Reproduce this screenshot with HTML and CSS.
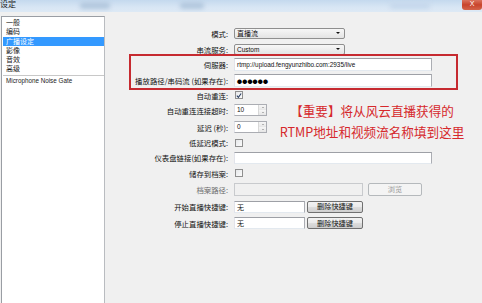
FILE: index.html
```html
<!DOCTYPE html>
<html lang="zh-CN">
<head>
    <meta charset="UTF-8">
    <meta name="viewport" content="width=device-width, initial-scale=1.0">
    <title>设定</title>
    <link rel="stylesheet" href="styles.css">
</head>
<body>
    <div class="titlebar">
        <span class="title">设定</span>
        <span class="blob b1"></span>
        <span class="blob b2"></span>
        <span class="blob b3"></span>
        <span class="close">X</span>
    </div>

    <div class="window">
        <ul class="sidebar">
            <li>一般</li>
            <li>编码</li>
            <li class="active">广播设定</li>
            <li>影像</li>
            <li>音效</li>
            <li>高级</li>
            <li class="sep">Microphone Noise Gate</li>
        </ul>

        <div class="panel">
            <div class="form">
                <label>模式:</label>
                <div class="field"><div class="select">直播流</div></div>

                <label>串流服务:</label>
                <div class="field"><div class="select latin">Custom</div></div>

                <label>伺服器:</label>
                <div class="field"><div class="input wide latin">rtmp://upload.fengyunzhibo.com:2935/live</div></div>

                <label>播放路径/串码流 (如果存在):</label>
                <div class="field"><div class="input wide dots">●●●●●●</div></div>

                <label>自动重连:</label>
                <div class="field">
                    <span class="check">
                        <svg width="7" height="7" viewBox="0 0 7 7"><polyline points="1,3.6 2.8,5.6 6,1.2" fill="none" stroke="#2a3f63" stroke-width="1.3"/></svg>
                    </span>
                </div>

                <label>自动重连连接超时:</label>
                <div class="field"><div class="spin"><span class="latin">10</span><span class="arrows"><i class="up"></i><i class="down"></i></span></div></div>

                <label>延迟 (秒):</label>
                <div class="field"><div class="spin"><span class="latin">0</span><span class="arrows"><i class="up"></i><i class="down"></i></span></div></div>

                <label>低延迟模式:</label>
                <div class="field"><span class="check"></span></div>

                <label>仪表盘链接(如果存在):</label>
                <div class="field"><div class="input wide short"></div></div>

                <label>储存到档案:</label>
                <div class="field"><span class="check"></span></div>

                <label class="muted">档案路径:</label>
                <div class="field">
                    <div class="input path"></div>
                    <button class="btn disabled">浏览</button>
                </div>

                <label>开始直播快捷键:</label>
                <div class="field">
                    <div class="input hotkey">无</div>
                    <button class="btn">删除快捷键</button>
                </div>

                <label>停止直播快捷键:</label>
                <div class="field">
                    <div class="input hotkey">无</div>
                    <button class="btn">删除快捷键</button>
                </div>
            </div>

            <div class="callout"></div>
            <div class="note">
                <p>【重要】将从风云直播获得的</p>
                <p>RTMP地址和视频流名称填到这里</p>
            </div>
        </div>
    </div>
</body>
</html>
```

FILE: styles.css
```css
*{
    margin: 0;
    padding: 0;
    box-sizing: border-box;
}
body{
    width: 482px;
    height: 303px;
    overflow: hidden;
    background-color: #f0f0f0;
    font-family: "Noto Sans CJK SC", "Liberation Sans", sans-serif;
    font-size: 7.4px;
    color: #111;
}
.latin{
    font-family: "Liberation Sans", "Noto Sans CJK SC", sans-serif;
}

/* title bar */
.titlebar{
    position: relative;
    height: 12px;
    background: linear-gradient(#c4d9ee, #d8e6f4 60%, #dde9f5);
    overflow: hidden;
}
.title{
    display: block;
    font-size: 8px;
    line-height: 9px;
    margin-top: -1px;
    color: #222;
}
.blob{
    position: absolute;
    top: 2px;
    height: 7px;
    border-radius: 3px;
    background: #b3c8de;
    filter: blur(2px);
}
.b1{ left: 80px; width: 30px; }
.b2{ left: 180px; width: 24px; }
.b3{ left: 390px; width: 40px; background: #c6d8ec; }
.close{
    position: absolute;
    right: 0;
    top: -3px;
    width: 20px;
    height: 13px;
    border-radius: 0 0 3px 3px;
    background: linear-gradient(#e6907c, #c8442c 60%, #d4644a);
    color: #fff;
    font-size: 7px;
    line-height: 14px;
    text-align: center;
    font-family: "Liberation Sans", sans-serif;
}

.window{
    display: flex;
    padding-top: 4px;
}

/* left list */
.sidebar{
    list-style: none;
    width: 104px;
    height: 300px;
    margin-left: 1px;
    padding: 1px 0 0 1px;
    background-color: #fff;
    border: 1px solid #9a9ea4;
    border-right-color: #b9bcc0;
}
.sidebar li{
    height: 9.3px;
    line-height: 9.3px;
    padding-left: 3px;
    font-size: 7px;
    color: #1a1a1a;
}
.sidebar .active{
    background-color: #3399ff;
    color: #fff;
}
.sidebar .sep{
    margin-top: 1px;
    border-top: 1px solid #c8c8c8;
    height: 10px;
    line-height: 9px;
    font-family: "Liberation Sans", sans-serif;
    font-size: 6.3px;
}

/* form */
.panel{
    position: relative;
    flex: 1;
    padding-top: 9px;
}
.form{
    display: grid;
    grid-template-columns: 123px auto;
    grid-template-rows: 16px 16px 15px 17px 12px 18px 16px 15px 15px 16px 17px 17px 16px;
    column-gap: 6px;
    align-items: center;
}
.form label{
    text-align: right;
    white-space: nowrap;
}
.form .muted{
    color: #6a6a6a;
}
.field{
    display: flex;
    align-items: center;
    gap: 2px;
}

.select{
    position: relative;
    width: 111px;
    height: 11px;
    line-height: 9px;
    padding-left: 2px;
    border: 1px solid #8f8f8f;
    border-radius: 2px;
    background: linear-gradient(#f7f7f7, #e4e4e4);
    font-size: 7px;
}
.select.latin{
    font-size: 6.5px;
}
.select::after{
    content: "";
    position: absolute;
    right: 4px;
    top: 3.5px;
    border-left: 2px solid transparent;
    border-right: 2px solid transparent;
    border-top: 2.5px solid #111;
}

.input{
    height: 13px;
    line-height: 11px;
    padding-left: 2px;
    background-color: #fff;
    border: 1px solid #abadb3;
    border-top-color: #9ea0a6;
    border-left-color: #e2e3ea;
    border-bottom-color: #e3e9ef;
    font-size: 7px;
}
.input.latin{
    font-size: 6.4px;
}
.wide{
    width: 198px;
}
.short{
    height: 12px;
}
.dots{
    font-size: 5px;
    letter-spacing: 0.2px;
    color: #000;
}
.path{
    width: 129px;
    background-color: #f0f0f0;
    border-color: #c8cacd;
}
.hotkey{
    width: 71px;
    height: 12px;
}

.check{
    display: flex;
    align-items: center;
    justify-content: center;
    width: 8px;
    height: 8px;
    margin-left: 1px;
    background: linear-gradient(135deg, #e6e8ea, #fbfbfb);
    border: 1px solid #8f8f8f;
}

.spin{
    display: flex;
    width: 33px;
    height: 12px;
    background-color: #fff;
    border: 1px solid #abadb3;
    border-left-color: #e2e3ea;
    font-size: 6.5px;
    line-height: 10px;
}
.spin span:first-child{
    flex: 1;
    padding-left: 2px;
}
.arrows{
    display: flex;
    flex-direction: column;
    width: 8px;
    border-left: 1px solid #d8d8d8;
}
.arrows i{
    flex: 1;
    display: flex;
    align-items: center;
    justify-content: center;
    background: linear-gradient(#f6f6f6, #e6e6e6);
}
.arrows i::after{
    content: "";
    border-left: 1.5px solid transparent;
    border-right: 1.5px solid transparent;
}
.up::after{ border-bottom: 1.5px solid #777; }
.down::after{ border-top: 1.5px solid #777; }

.btn{
    width: 56px;
    height: 12px;
    border: 1px solid #707070;
    border-radius: 2px;
    background: linear-gradient(#f2f2f2, #ebebeb 45%, #dddddd 50%, #cfcfcf);
    font-family: inherit;
    font-size: 7.2px;
    color: #111;
    line-height: 9px;
}
.btn.disabled{
    width: 54px;
    height: 13px;
    margin-left: 3px;
    border-color: #b5b9bc;
    background: #f4f4f4;
    color: #9a9a9a;
}

/* annotation */
.callout{
    position: absolute;
    left: 24px;
    top: 38px;
    width: 329px;
    height: 36px;
    border: 2px solid #c62a30;
}
.note{
    position: absolute;
    left: 167px;
    top: 84px;
    width: 200px;
    text-align: center;
    color: #d6282c;
    font-size: 12.6px;
    line-height: 21px;
    white-space: nowrap;
}
```
